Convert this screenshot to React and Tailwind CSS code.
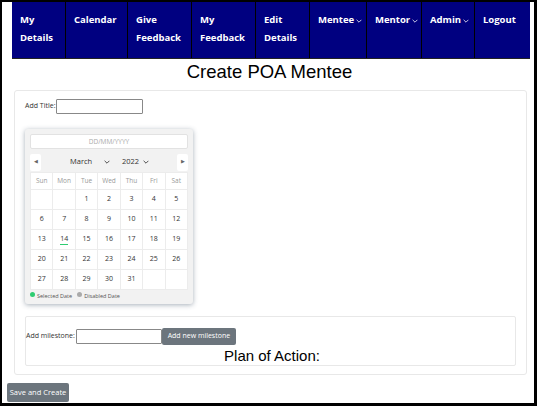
import React from "react";

const navItems = [
  { label: ["My", "Details"], w: 53 },
  { label: ["Calendar"], w: 62 },
  { label: ["Give", "Feedback"], w: 64 },
  { label: ["My", "Feedback"], w: 64 },
  { label: ["Edit", "Details"], w: 54 },
  { label: ["Mentee"], w: 57, drop: true },
  { label: ["Mentor"], w: 55, drop: true },
  { label: ["Admin"], w: 53, drop: true },
  { label: ["Logout"], w: 56 },
];

const Chev = ({ className = "" }) => (
  <svg viewBox="0 0 10 6" className={className} fill="none" stroke="currentColor" strokeWidth="1.3">
    <path d="M1 1l4 4 4-4" />
  </svg>
);

const days = ["Sun", "Mon", "Tue", "Wed", "Thu", "Fri", "Sat"];
const cells = [
  "", "", "1", "2", "3", "4", "5",
  "6", "7", "8", "9", "10", "11", "12",
  "13", "14", "15", "16", "17", "18", "19",
  "20", "21", "22", "23", "24", "25", "26",
  "27", "28", "29", "30", "31", "", "",
];

export default function App() {
  const sans = { fontFamily: '"Open Sans", "Noto Sans", sans-serif' };
  return (
    <div
      className="w-[537px] h-[406px] bg-white border-black border-l-2 border-t-2 border-r-[3px] border-b-[3px] overflow-hidden"
      style={sans}
    >
      <nav className="ml-[10px] w-[518px] h-[57px] bg-[#000080] flex border-b border-[#222]">
        {navItems.map((it, i) => (
          <div
            key={i}
            className={`h-full pl-[8px] pt-[9px] text-white font-bold text-[9.5px] leading-[18px] ${i > 0 ? "border-l border-black" : ""}`}
            style={{ width: it.w }}
          >
            {it.label.map((l, j) => (
              <div key={j} className="flex items-center gap-[2px] whitespace-nowrap">
                {l}
                {it.drop && <Chev className="w-[6px] h-[4px] mt-[1px]" />}
              </div>
            ))}
          </div>
        ))}
      </nav>
      <h1
        className="text-center text-[18.5px] leading-[24px] mt-[1px] ml-[3px] text-black"
        style={{ fontFamily: '"Liberation Sans", Arial, sans-serif' }}
      >
        Create POA Mentee
      </h1>
      <div className="ml-[12px] mt-[6px] w-[513px] h-[285px] border border-[#e8e8e8] rounded-[3px] px-[10px] pt-[8px]">
        <div className="flex items-center text-[7px] text-[#333]">
          <span>Add Title:</span>
          <div className="ml-[1px] w-[87px] h-[15px] border border-[#888] rounded-[1px] bg-white" />
        </div>
        <div className="mt-[15px] w-[168px] h-[175px] bg-[#f2f2f2] rounded-[3px] shadow-[0_1px_5px_rgba(60,80,100,0.45)] p-[5px]">
          <div className="h-[15px] bg-white rounded-[2px] border border-[#e2e2e2] flex items-center justify-center text-[6.5px] text-[#aaa]">
            DD/MM/YYYY
          </div>
          <div className="mt-[4px] h-[18px] flex items-center text-[7.5px] text-[#333]">
            <div className="w-[11px] h-[17px] bg-white rounded-[2px] flex items-center justify-center text-[5px] text-[#666]">◀</div>
            <div className="ml-[29px] w-[40px] flex items-center justify-between">
              <span>March</span>
              <Chev className="w-[6px] h-[4px] text-[#222]" />
            </div>
            <div className="ml-[12px] flex items-center gap-[4px]">
              <span>2022</span>
              <Chev className="w-[6px] h-[4px] text-[#222]" />
            </div>
            <div className="ml-auto w-[11px] h-[17px] bg-white rounded-[2px] flex items-center justify-center text-[5px] text-[#666]">▶</div>
          </div>
          <div className="mt-[1px] grid grid-cols-7 gap-px bg-[#ececec] border border-[#ececec]">
            {days.map((d) => (
              <div key={d} className="h-[16px] bg-white flex items-center justify-center text-[6.5px] text-[#999]">
                {d}
              </div>
            ))}
            {cells.map((c, i) => (
              <div key={i} className="h-[19px] bg-white flex items-center justify-center text-[7px] text-[#333]">
                {c === "14" ? (
                  <span className="border-b border-[#2ecc71] leading-[9px] pb-[1px]">{c}</span>
                ) : (
                  c
                )}
              </div>
            ))}
          </div>
          <div className="mt-[2px] flex items-end text-[5.5px] text-[#555] gap-[5px]">
            <div className="flex items-end gap-[2px]">
              <span className="w-[5px] h-[5px] rounded-full bg-[#2ecc71] mb-[3px]" />
              <span>Selected Date</span>
            </div>
            <div className="flex items-end gap-[2px]">
              <span className="w-[5px] h-[5px] rounded-full bg-[#aaa] mb-[3px]" />
              <span>Disabled Date</span>
            </div>
          </div>
        </div>
        <div className="mt-[12px] h-[50px] border border-[#e8e8e8] rounded-[2px] relative">
          <div className="flex items-center mt-[11px] text-[7px] text-[#333]">
            <span>Add milestone:</span>
            <div className="ml-[1px] w-[86px] h-[15px] border border-[#888] rounded-[1px] bg-white" />
            <div className="w-[74px] h-[17px] bg-[#6c757d] text-white rounded-[2px] flex items-center justify-center text-[7px]">
              Add new milestone
            </div>
          </div>
          <div
            className="text-center text-[15px] leading-[18px] mt-[2px] ml-[3px] text-black"
            style={{ fontFamily: '"Liberation Sans", Arial, sans-serif' }}
          >
            Plan of Action:
          </div>
        </div>
      </div>
      <div className="ml-[5px] mt-[8px] w-[62px] h-[19px] bg-[#6c757d] text-white rounded-[2px] flex items-center justify-center text-[7.5px]">
        Save and Create
      </div>
    </div>
  );
}
